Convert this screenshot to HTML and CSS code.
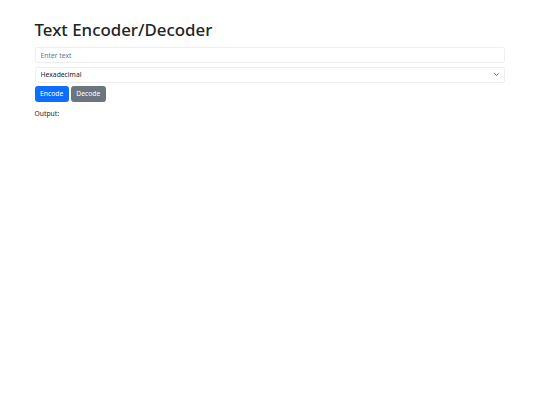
FILE: index.html
```html
<!DOCTYPE html>
<html lang="en">
<head>
<meta charset="utf-8">
<title>Text Encoder/Decoder</title>
<link rel="stylesheet" href="styles.css">
</head>
<body>
<div class="container">
  <h1 class="title">Text Encoder/Decoder</h1>
  <input class="field" type="text" placeholder="Enter text">
  <div class="select-wrap">
    <select class="field select">
      <option>Hexadecimal</option>
      <option>Base64</option>
      <option>Binary</option>
    </select>
    <svg class="chevron" viewBox="0 0 16 16" width="5" height="5"><path fill="none" stroke="#343a40" stroke-linecap="round" stroke-linejoin="round" stroke-width="2.5" d="m2 5 6 6 6-6"/></svg>
  </div>
  <div class="actions">
    <button class="btn btn-primary">Encode</button>
    <button class="btn btn-secondary">Decode</button>
  </div>
  <div class="output">Output:</div>
</div>
</body>
</html>
```

FILE: styles.css
```css
* { box-sizing: border-box; }
html, body { margin: 0; padding: 0; background: #fff; }
body {
  font-family: "Noto Sans", "Open Sans", sans-serif;
  font-size: 6.75px;
  line-height: 1.5;
  color: #212529;
}
.container {
  max-width: 481px;
  margin: 20.25px auto 0;
  padding: 0 5.06px;
}
.title {
  font-size: 16.875px;
  font-weight: 500;
  line-height: 1.2;
  margin: 0 0 6.75px;
}
.field {
  display: block;
  width: 100%;
  height: 16px;
  margin: 0 0 3.375px;
  padding: 0 5.06px;
  font-family: inherit;
  font-size: 6.75px;
  line-height: 1.5;
  color: #212529;
  background: #fff;
  border: 1px solid #eceef0;
  border-radius: 2.53px;
  outline: none;
}
.field::placeholder { color: #6c757d; }
.select-wrap { position: relative; }
.select {
  appearance: none;
  -webkit-appearance: none;
  padding-right: 15px;
}
.chevron {
  position: absolute;
  right: 6px;
  top: 5.5px;
  pointer-events: none;
}
.actions {
  display: flex;
  gap: 2px;
}
.btn {
  height: 16px;
  padding: 0 4.5px;
  font-family: inherit;
  font-size: 6.75px;
  line-height: 1.5;
  border-radius: 2.53px;
  color: #fff;
  cursor: pointer;
}
.btn-primary { background: #0d6efd; border: 1px solid #0d6efd; }
.btn-secondary { background: #6c757d; border: 1px solid #6c757d; }
.output {
  margin-top: 6.75px;
}
```
